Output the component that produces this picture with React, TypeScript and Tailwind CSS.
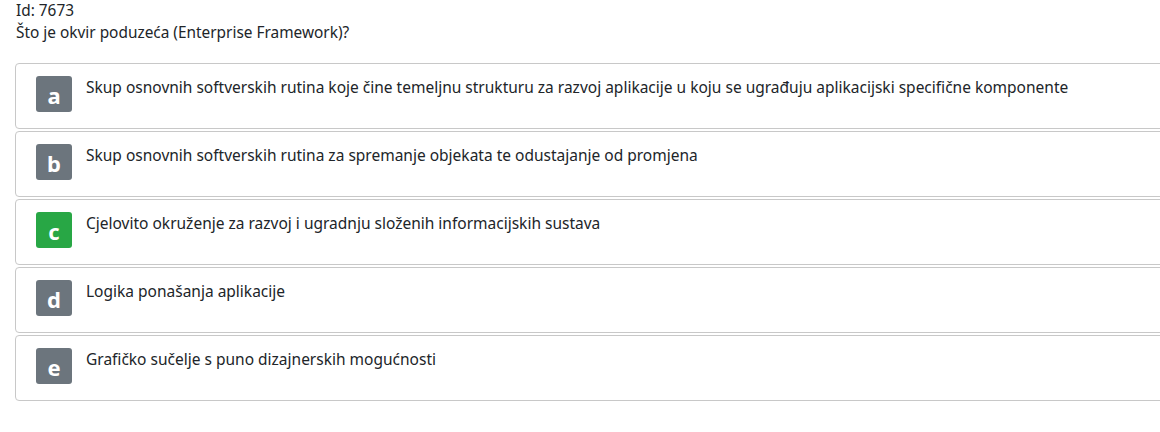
const options = [
  { key: 'a', text: 'Skup osnovnih softverskih rutina koje čine temeljnu strukturu za razvoj aplikacije u koju se ugrađuju aplikacijski specifične komponente', correct: false },
  { key: 'b', text: 'Skup osnovnih softverskih rutina za spremanje objekata te odustajanje od promjena', correct: false },
  { key: 'c', text: 'Cjelovito okruženje za razvoj i ugradnju složenih informacijskih sustava', correct: true },
  { key: 'd', text: 'Logika ponašanja aplikacije', correct: false },
  { key: 'e', text: 'Grafičko sučelje s puno dizajnerskih mogućnosti', correct: false },
];

function Option({ letter, text, correct }) {
  return (
    <div className="flex items-start w-[1160px] h-[66px] mb-[2px] border border-[#c8c8c8] rounded-[4px] bg-white pl-[20px] pt-[12px]">
      <div
        className={
          'w-[36px] h-[36px] rounded-[3px] flex items-center justify-center text-white text-[22px] font-bold leading-none shrink-0 ' +
          (correct ? 'bg-[#28a745]' : 'bg-[#6c757d]')
        }
      >
        <span className="mt-[2px]">{letter}</span>
      </div>
      <div className="ml-[14px] -mt-[1px] text-[15.5px] leading-[24px] text-[#212529]">{text}</div>
    </div>
  );
}

export default function App() {
  return (
    <div className="w-[1160px] h-[432px] overflow-hidden bg-white" style={{ fontFamily: '"Noto Sans", "Open Sans", sans-serif' }}>
      <div className="pl-[16px] text-[15.4px] text-[#212529]">
        <div className="leading-[21px]">Id: 7673</div>
        <div className="leading-[24px]">Što je okvir poduzeća (Enterprise Framework)?</div>
      </div>
      <div className="pl-[15px] mt-[18px]">
        {options.map(o => (
          <Option key={o.key} letter={o.key} text={o.text} correct={o.correct} />
        ))}
      </div>
    </div>
  );
}
